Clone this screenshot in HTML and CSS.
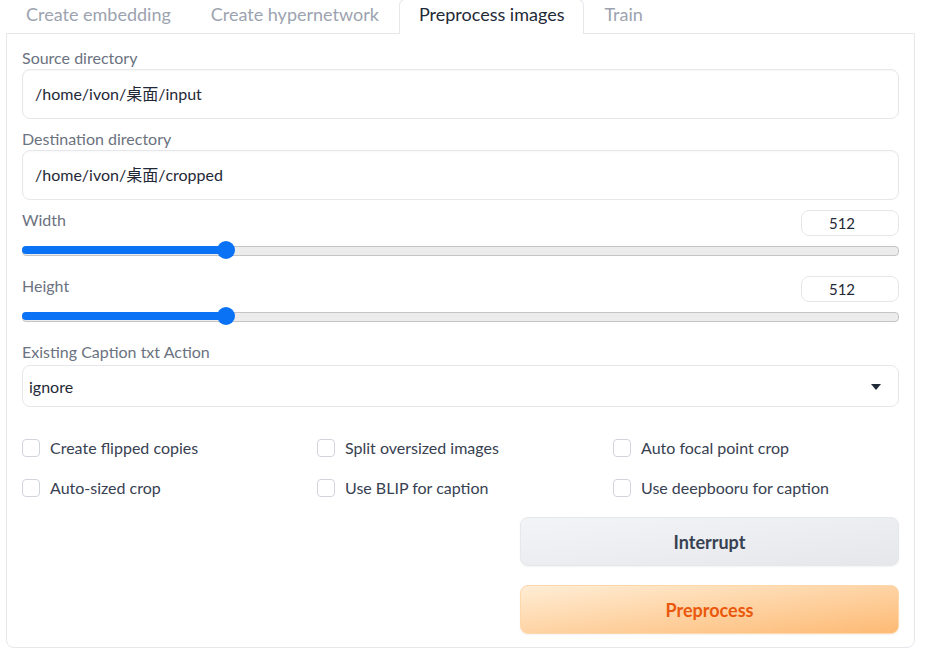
FILE: index.html
```html
<!DOCTYPE html>
<html>
<head>
<meta charset="utf-8">
<link rel="stylesheet" href="styles.css">
</head>
<body>
<div class="tabs">
  <button class="tab">Create embedding</button>
  <button class="tab">Create hypernetwork</button>
  <button class="tab selected">Preprocess images</button>
  <button class="tab">Train</button>
</div>
<div class="panel">
  <div class="field">
    <label class="label">Source directory</label>
    <div class="textbox">/home/ivon/桌面/input</div>
  </div>
  <div class="field">
    <label class="label">Destination directory</label>
    <div class="textbox">/home/ivon/桌面/cropped</div>
  </div>
  <div class="field slider-field">
    <div class="slider-head">
      <label class="label">Width</label>
      <div class="number">512</div>
    </div>
    <div class="track">
      <div class="fill" style="width: 203px"></div>
      <div class="thumb" style="left: 195px"></div>
    </div>
  </div>
  <div class="field slider-field">
    <div class="slider-head">
      <label class="label">Height</label>
      <div class="number">512</div>
    </div>
    <div class="track">
      <div class="fill" style="width: 203px"></div>
      <div class="thumb" style="left: 195px"></div>
    </div>
  </div>
  <div class="field">
    <label class="label label-dd">Existing Caption txt Action</label>
    <div class="dropdown">
      <span>ignore</span>
      <svg class="caret" width="10" height="6" viewBox="0 0 10 6"><path d="M0 0 L10 0 L5 6 Z" fill="#1f2937"/></svg>
    </div>
  </div>
  <div class="checks">
    <label class="check"><span class="box"></span>Create flipped copies</label>
    <label class="check"><span class="box"></span>Split oversized images</label>
    <label class="check"><span class="box"></span>Auto focal point crop</label>
    <label class="check"><span class="box"></span>Auto-sized crop</label>
    <label class="check"><span class="box"></span>Use BLIP for caption</label>
    <label class="check"><span class="box"></span>Use deepbooru for caption</label>
  </div>
  <div class="actions">
    <button class="btn btn-secondary">Interrupt</button>
    <button class="btn btn-primary">Preprocess</button>
  </div>
</div>
</body>
</html>
```

FILE: styles.css
```css
* { box-sizing: border-box; }
body {
  margin: 0;
  background: #ffffff;
  font-family: Lato, "Noto Sans CJK SC", sans-serif;
  color: #1f2937;
}
.tabs {
  display: flex;
  margin: -1px 10px 0 6px;
  height: 35px;
  position: relative;
  z-index: 1;
}
.tab {
  font-family: inherit;
  font-size: 18px;
  color: #9ca3af;
  background: transparent;
  border: 1px solid transparent;
  border-bottom: none;
  padding: 0 19px 6px;
  height: 35px;
  cursor: pointer;
}
.tab.selected {
  color: #1f2937;
  background: #ffffff;
  border-color: #e5e7eb;
  border-radius: 6px 6px 0 0;
}
.panel {
  margin: -1px 10px 0 6px;
  border: 1px solid #e5e7eb;
  border-radius: 0 0 8px 8px;
  padding: 14px 15px 13px;
  display: flex;
  flex-direction: column;
  gap: 10px;
}
.field {
  display: flex;
  flex-direction: column;
  gap: 1px;
}
.label {
  font-size: 16px;
  line-height: 20px;
  color: #6b7280;
}
.label-dd { margin-bottom: 2px; }
.textbox {
  height: 50px;
  border: 1px solid #e5e7eb;
  border-radius: 8px;
  padding: 0 12px 2px;
  display: flex;
  align-items: center;
  font-size: 16px;
  color: #1f2937;
  box-shadow: inset 0 1px 2px rgba(0,0,0,0.03);
}
.slider-field { padding-bottom: 7px; gap: 5px; }
.slider-head {
  display: flex;
  justify-content: space-between;
  align-items: flex-start;
  height: 26px;
}
.number {
  width: 98px;
  height: 26px;
  border: 1px solid #e5e7eb;
  border-radius: 8px;
  display: flex;
  align-items: center;
  justify-content: center;
  padding-right: 16px;
  font-size: 15px;
  color: #1f2937;
}
.track {
  position: relative;
  height: 18px;
  display: flex;
  align-items: center;
}
.track::before {
  content: "";
  position: absolute;
  left: 0; right: 0;
  top: 5px;
  height: 8px;
  background: #ececec;
  border: 1px solid #c4c4c4;
  border-radius: 4px;
}
.fill {
  position: relative;
  height: 8px;
  background: #0a72f5;
  border-radius: 4px;
}
.thumb {
  position: absolute;
  top: 0;
  width: 18px;
  height: 18px;
  border-radius: 50%;
  background: #0a72f5;
}
.dropdown {
  height: 42px;
  border: 1px solid #e5e7eb;
  border-radius: 8px;
  padding: 0 17px 0 6px;
  display: flex;
  align-items: center;
  justify-content: space-between;
  font-size: 16px;
  color: #1f2937;
}
.caret { margin-top: 2px; }
.checks {
  display: grid;
  grid-template-columns: 295px 296px 1fr;
  row-gap: 22px;
  margin-top: 22px;
}
.check {
  display: flex;
  align-items: center;
  gap: 10px;
  font-size: 16px;
  line-height: 18px;
  color: #374151;
}
.box {
  width: 18px;
  height: 18px;
  border: 1px solid #d1d5db;
  border-radius: 4px;
  background: #fff;
  flex: none;
}
.actions {
  display: flex;
  flex-direction: column;
  align-items: flex-end;
  gap: 19px;
  margin-top: 10px;
}
.btn {
  width: 379px;
  height: 49px;
  border-radius: 8px;
  font-family: inherit;
  font-size: 18px;
  font-weight: 700;
  cursor: pointer;
}
.btn-secondary {
  background: linear-gradient(to bottom right, #f3f4f6, #e5e7eb);
  border: 1px solid #e5e7eb;
  color: #374151;
  box-shadow: 0 1px 2px rgba(0,0,0,0.05);
}
.btn-primary {
  background: linear-gradient(to bottom right, #ffedd5, #fdba74);
  border: 1px solid #fed7aa;
  color: #ea580c;
  box-shadow: 0 1px 2px rgba(0,0,0,0.05);
}
```
